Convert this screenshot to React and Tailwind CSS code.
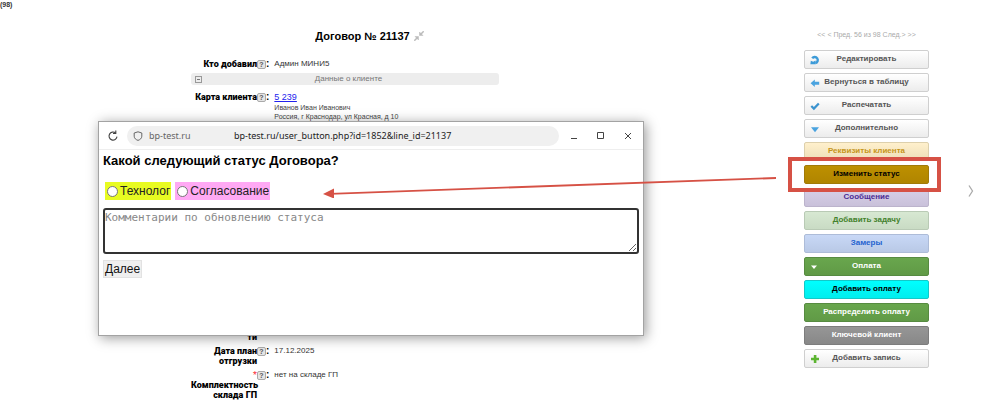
import React, { useState } from 'react';
import clsx from 'clsx';

const actions = [
  { label: 'Редактировать', icon: 'edit', style: 'bg-linear-to-b from-white to-[#ececec] border-[#cfcfcf] text-[#555]' },
  { label: 'Вернуться в таблицу', icon: 'back', style: 'bg-linear-to-b from-white to-[#ececec] border-[#cfcfcf] text-[#555]' },
  { label: 'Распечатать', icon: 'check', style: 'bg-linear-to-b from-white to-[#ececec] border-[#cfcfcf] text-[#555]' },
  { label: 'Дополнительно', icon: 'down', style: 'bg-linear-to-b from-white to-[#ececec] border-[#cfcfcf] text-[#555]' },
  { label: 'Реквизиты клиента', style: 'bg-linear-to-b from-[#fff0cc] to-[#eddfb9] border-[#ddd0ac] text-[#c6951a]' },
  { label: 'Изменить статус', marked: true, style: 'bg-linear-to-b from-[#bd9000] to-[#b08500] border-[#a17a08] text-black' },
  { label: 'Сообщение', style: 'bg-linear-to-b from-[#d7d0e7] to-[#c9c1da] border-[#bcb4cc] text-[#4b2a94]' },
  { label: 'Добавить задачу', style: 'bg-linear-to-b from-[#d7e8d2] to-[#c9dbc4] border-[#b9cab5] text-[#43812d]' },
  { label: 'Замеры', style: 'bg-linear-to-b from-[#c8d8f6] to-[#b9c9e6] border-[#adbcd8] text-[#2563cf]' },
  { label: 'Оплата', icon: 'caret', style: 'bg-linear-to-b from-[#69a64d] to-[#609a46] border-[#578b41] text-white' },
  { label: 'Добавить оплату', style: 'bg-linear-to-b from-[#00ffff] to-[#00eeee] border-[#12c9c9] text-black' },
  { label: 'Распределить оплату', style: 'bg-linear-to-b from-[#69a64d] to-[#609a46] border-[#578b41] text-white' },
  { label: 'Ключевой клиент', style: 'bg-linear-to-b from-[#969696] to-[#888] border-[#7d7d7d] text-white' },
  { label: 'Добавить запись', icon: 'plus', style: 'bg-linear-to-b from-white to-[#ececec] border-[#cfcfcf] text-[#555]' },
];

const ActionIcon = ({ name }) => {
  const cls = 'absolute left-[5px] top-1 h-[10px] w-[10px]';
  switch (name) {
    case 'edit':
      return (
        <svg className={cls} viewBox="0 0 10 10" fill="none">
          <path d="M2.200 3.200A3.100 3.100 0 1 1 5.400 8.100" stroke="#3d9bd8" strokeWidth="2.4" />
          <path d="M.4 9.200.8 5.800l2.400 1 2.400-1.200v3.600z" fill="#3d9bd8" />
        </svg>
      );
    case 'back':
      return (
        <svg className={cls} viewBox="0 0 10 10">
          <path d="M.6 5.2 4.800 1.4v2.300h4.400v3H4.800V9z" fill="#4aa3df" />
        </svg>
      );
    case 'check':
      return (
        <svg className={cls} viewBox="0 0 10 10" fill="none">
          <path d="M1.3 5 3.900 7.6l4.900-5.200" stroke="#3a93cf" strokeWidth="2.2" />
        </svg>
      );
    case 'down':
      return (
        <svg className={cls} viewBox="0 0 10 10">
          <path d="M1 3.2h8L5 8.2z" fill="#4aa3df" />
        </svg>
      );
    case 'caret':
      return (
        <svg className={cls} viewBox="0 0 10 10">
          <path d="M1 3.600h6L4 7z" fill="#fff" />
        </svg>
      );
    case 'plus':
      return (
        <svg className={cls} viewBox="0 0 10 10">
          <path d="M3.8 1h2.6v2.8H9v2.5H6.4V9H3.8V6.3H1V3.8h2.8z" fill="#5cb531" />
        </svg>
      );
    default:
      return null;
  }
};

const Hint = () => (
  <button
    type="button"
    aria-label="Подсказка"
    className="h-[9px] w-[9px] shrink-0 rounded-[2px] border border-[#aaa] bg-[#e4e4e4] text-center text-[7px] leading-[7px] font-bold text-[#555]"
  >
    ?
  </button>
);

const Row = ({ label, required, className, children }) => (
  <div className={clsx('flex items-start', className)}>
    <div className="w-[66px] shrink-0 text-right font-[Roboto] text-[9px] leading-[10px] font-black text-black">
      {required && <span className="block font-normal text-red-500">*</span>}
      {label}
    </div>
    <div className="mr-[5px] flex items-center text-[10px] leading-[10px] font-bold text-black">
      <Hint />:
    </div>
    <div className="text-[8px] leading-[10px] text-[#333]">{children}</div>
  </div>
);

const StatusWindow = () => {
  const [status, setStatus] = useState('');
  const [comment, setComment] = useState('');

  return (
    <section className="absolute top-[121px] left-[98px] flex min-h-[215px] w-[546px] flex-col border border-[#a3a3a3] bg-white text-black shadow-[2px_2px_12px_rgba(0,0,0,0.4)]">
      <header className="flex h-7 items-center border-b border-[#eee] font-['Noto_Sans',sans-serif] text-[9px]">
        <button type="button" aria-label="Обновить" className="ml-2">
          <svg className="h-3 w-3" viewBox="0 0 12 12" fill="none" stroke="#444" strokeWidth="1.1">
            <path d="M10 6.6A4 4 0 1 1 8.6 3" />
            <path d="M8.8.6v2.8H6" />
          </svg>
        </button>
        <div className="ml-2 flex h-5 flex-1 items-center rounded-full bg-[#f0f0f0] pl-[6px]">
          <svg className="h-[10px] w-[10px]" viewBox="0 0 10 10" fill="none" stroke="#666">
            <path d="M5 .8 8.8 2v3.2C8.8 7.400 7 8.700 5 9.400 3 8.700 1.200 7.400 1.200 5.200V2z" />
          </svg>
          <span className="ml-[6px] w-[85px] text-[#666]">bp-test.ru</span>
          <span className="text-[#222]">bp-test.ru/user_button.php?id=1852&amp;line_id=21137</span>
        </div>
        <div className="mr-[10px] ml-[10px] flex gap-[17px]">
          <button type="button" aria-label="Свернуть">
            <svg className="h-[10px] w-[10px]" viewBox="0 0 10 10" stroke="#444">
              <path d="M2 7.500h6" />
            </svg>
          </button>
          <button type="button" aria-label="Развернуть">
            <svg className="h-[10px] w-[10px]" viewBox="0 0 10 10" fill="none" stroke="#444">
              <path d="M1.500 1.500h6v6h-6z" />
            </svg>
          </button>
          <button type="button" aria-label="Закрыть">
            <svg className="h-[10px] w-[10px]" viewBox="0 0 10 10" stroke="#444">
              <path d="m2 2 6 6M8 2 2 8" />
            </svg>
          </button>
        </div>
      </header>

      <form className="flex flex-col items-start px-1 pt-[3px]" onSubmit={(e) => e.preventDefault()}>
        <h2 className="text-[13px] leading-4 font-bold">Какой следующий статус Договора?</h2>
        <div className="mt-[13px] ml-[2px] flex gap-1 text-[12px]">
          <label className="flex h-[18px] items-center gap-[2px] bg-[#e8fb22] pr-px pl-[2px] text-[#222]">
            <input
              type="radio"
              name="status"
              value="tech"
              checked={status === 'tech'}
              onChange={(e) => setStatus(e.target.value)}
              className="h-[11px] w-[11px] appearance-none rounded-full border border-[#777] bg-white checked:border-4"
            />
            Технолог
          </label>
          <label className="flex h-[18px] items-center gap-[2px] bg-[#ffa9f4] pr-px pl-[2px] text-[#222]">
            <input
              type="radio"
              name="status"
              value="approve"
              checked={status === 'approve'}
              onChange={(e) => setStatus(e.target.value)}
              className="h-[11px] w-[11px] appearance-none rounded-full border border-[#777] bg-white checked:border-4"
            />
            Согласование
          </label>
        </div>
        <textarea
          aria-label="Комментарий"
          placeholder="Комментарии по обновлению статуса"
          value={comment}
          onChange={(e) => setComment(e.target.value)}
          className="mt-2 h-[46px] w-full rounded-[3px] border-2 border-[#333] font-['DejaVu_Sans_Mono',monospace] text-[11px] leading-4 outline-none placeholder:text-[#888]"
        />
        <button type="submit" className="mt-[6px] h-[18px] border border-[#e2e2e2] bg-[#efefef] px-px text-[12px] leading-4 text-[#111]">
          Далее
        </button>
      </form>
    </section>
  );
};

const App = () => {
  return (
    <div className="relative flex min-h-screen bg-white font-['Liberation_Sans',Arial,sans-serif]">
      <main className="flex-1">
        <p className="h-[27px] text-[7px] leading-[10px] font-bold text-[#333]">(98)</p>
        <div className="ml-[191px] w-[308px]">
          <div className="flex items-center justify-center gap-1 pl-[49px]">
            <h1 className="text-[11px] leading-[18px] font-bold text-black">Договор № 21137</h1>
            <svg className="h-[10px] w-[10px]" viewBox="0 0 10 10" fill="#bbb" stroke="#bbb">
              <path d="M5.500 4.500V1l3.500 3.500zM4.500 5.500H1L4.500 9z" strokeWidth=".5" />
              <path d="M6.500 3.500 9.700.3M3.500 6.500.3 9.700" strokeWidth="1.500" />
            </svg>
          </div>
          <Row label="Кто добавил" className="mt-[14px]">Админ МИНИ5</Row>
          <div className="mt-1 flex h-3 items-center rounded-[3px] bg-[#ededed] px-1">
            <button type="button" aria-label="Свернуть раздел" className="flex h-[7px] w-[7px] items-center justify-center border border-[#999]">
              <span className="h-px w-[3px] bg-[#777]" />
            </button>
            <h2 className="flex-1 text-center text-[8px] leading-3 text-[#777]">Данные о клиенте</h2>
          </div>
          <Row label="Карта клиента" className="mt-[7px]">
            <a href="#client" className="text-[9px] text-[#2222ee] underline">5 239</a>
            <p className="text-[7px] leading-[9px] text-[#444]">Иванов Иван Иванович</p>
            <p className="text-[7px] text-[#444]">Россия, г Краснодар, ул Красная, д 10</p>
          </Row>
          <div className="mt-[210px] w-[66px] text-right font-[Roboto] text-[9px] leading-[10px] font-black text-black">ти</div>
          <Row label="Дата план отгрузки" className="mt-1">17.12.2025</Row>
          <Row label="Комплектность склада ГП" required className="mt-1">нет на складе ГП</Row>
        </div>
      </main>

      <aside className="w-[125px] pt-[30px]">
        <nav className="text-center text-[7px] leading-[10px] whitespace-nowrap text-[#aaa]">
          <a href="#first">&lt;&lt;</a> <a href="#prev">&lt; Пред.</a> 56 из 98 <a href="#next">След.&gt;</a> <a href="#last">&gt;&gt;</a>
        </nav>
        <div className="mt-[10px] flex flex-col gap-1">
          {actions.map((action) => (
            <div key={action.label} className="relative">
              <button
                type="button"
                className={clsx(
                  'relative block h-[19px] w-full rounded-[2px] border pb-px text-center text-[8px] leading-4 font-bold',
                  action.style
                )}
              >
                <ActionIcon name={action.icon} />
                {action.label}
              </button>
              {action.marked && (
                <div className="pointer-events-none absolute -top-2 -right-3 -bottom-2 -left-4 z-10 border-[4px] border-[#d65145]" />
              )}
            </div>
          ))}
        </div>
      </aside>
      <div className="flex w-[58px] items-start pt-[185px] pl-[39px]">
        <button type="button" aria-label="Следующая запись">
          <svg className="h-3 w-[6px]" viewBox="0 0 6 12" fill="none" stroke="#aaa" strokeWidth="1.300">
            <path d="m1 .5 3.500 5.500L1 11.500" />
          </svg>
        </button>
      </div>

      <StatusWindow />

      <svg className="pointer-events-none absolute top-[174px] left-[322px] h-6 w-[456px]" viewBox="0 0 456 24">
        <path d="M8 19.800 454 4" stroke="#d65145" strokeWidth="1.800" />
        <path d="m1 20 11-5.500v10z" fill="#d65145" />
      </svg>
    </div>
  );
};

export default App;
